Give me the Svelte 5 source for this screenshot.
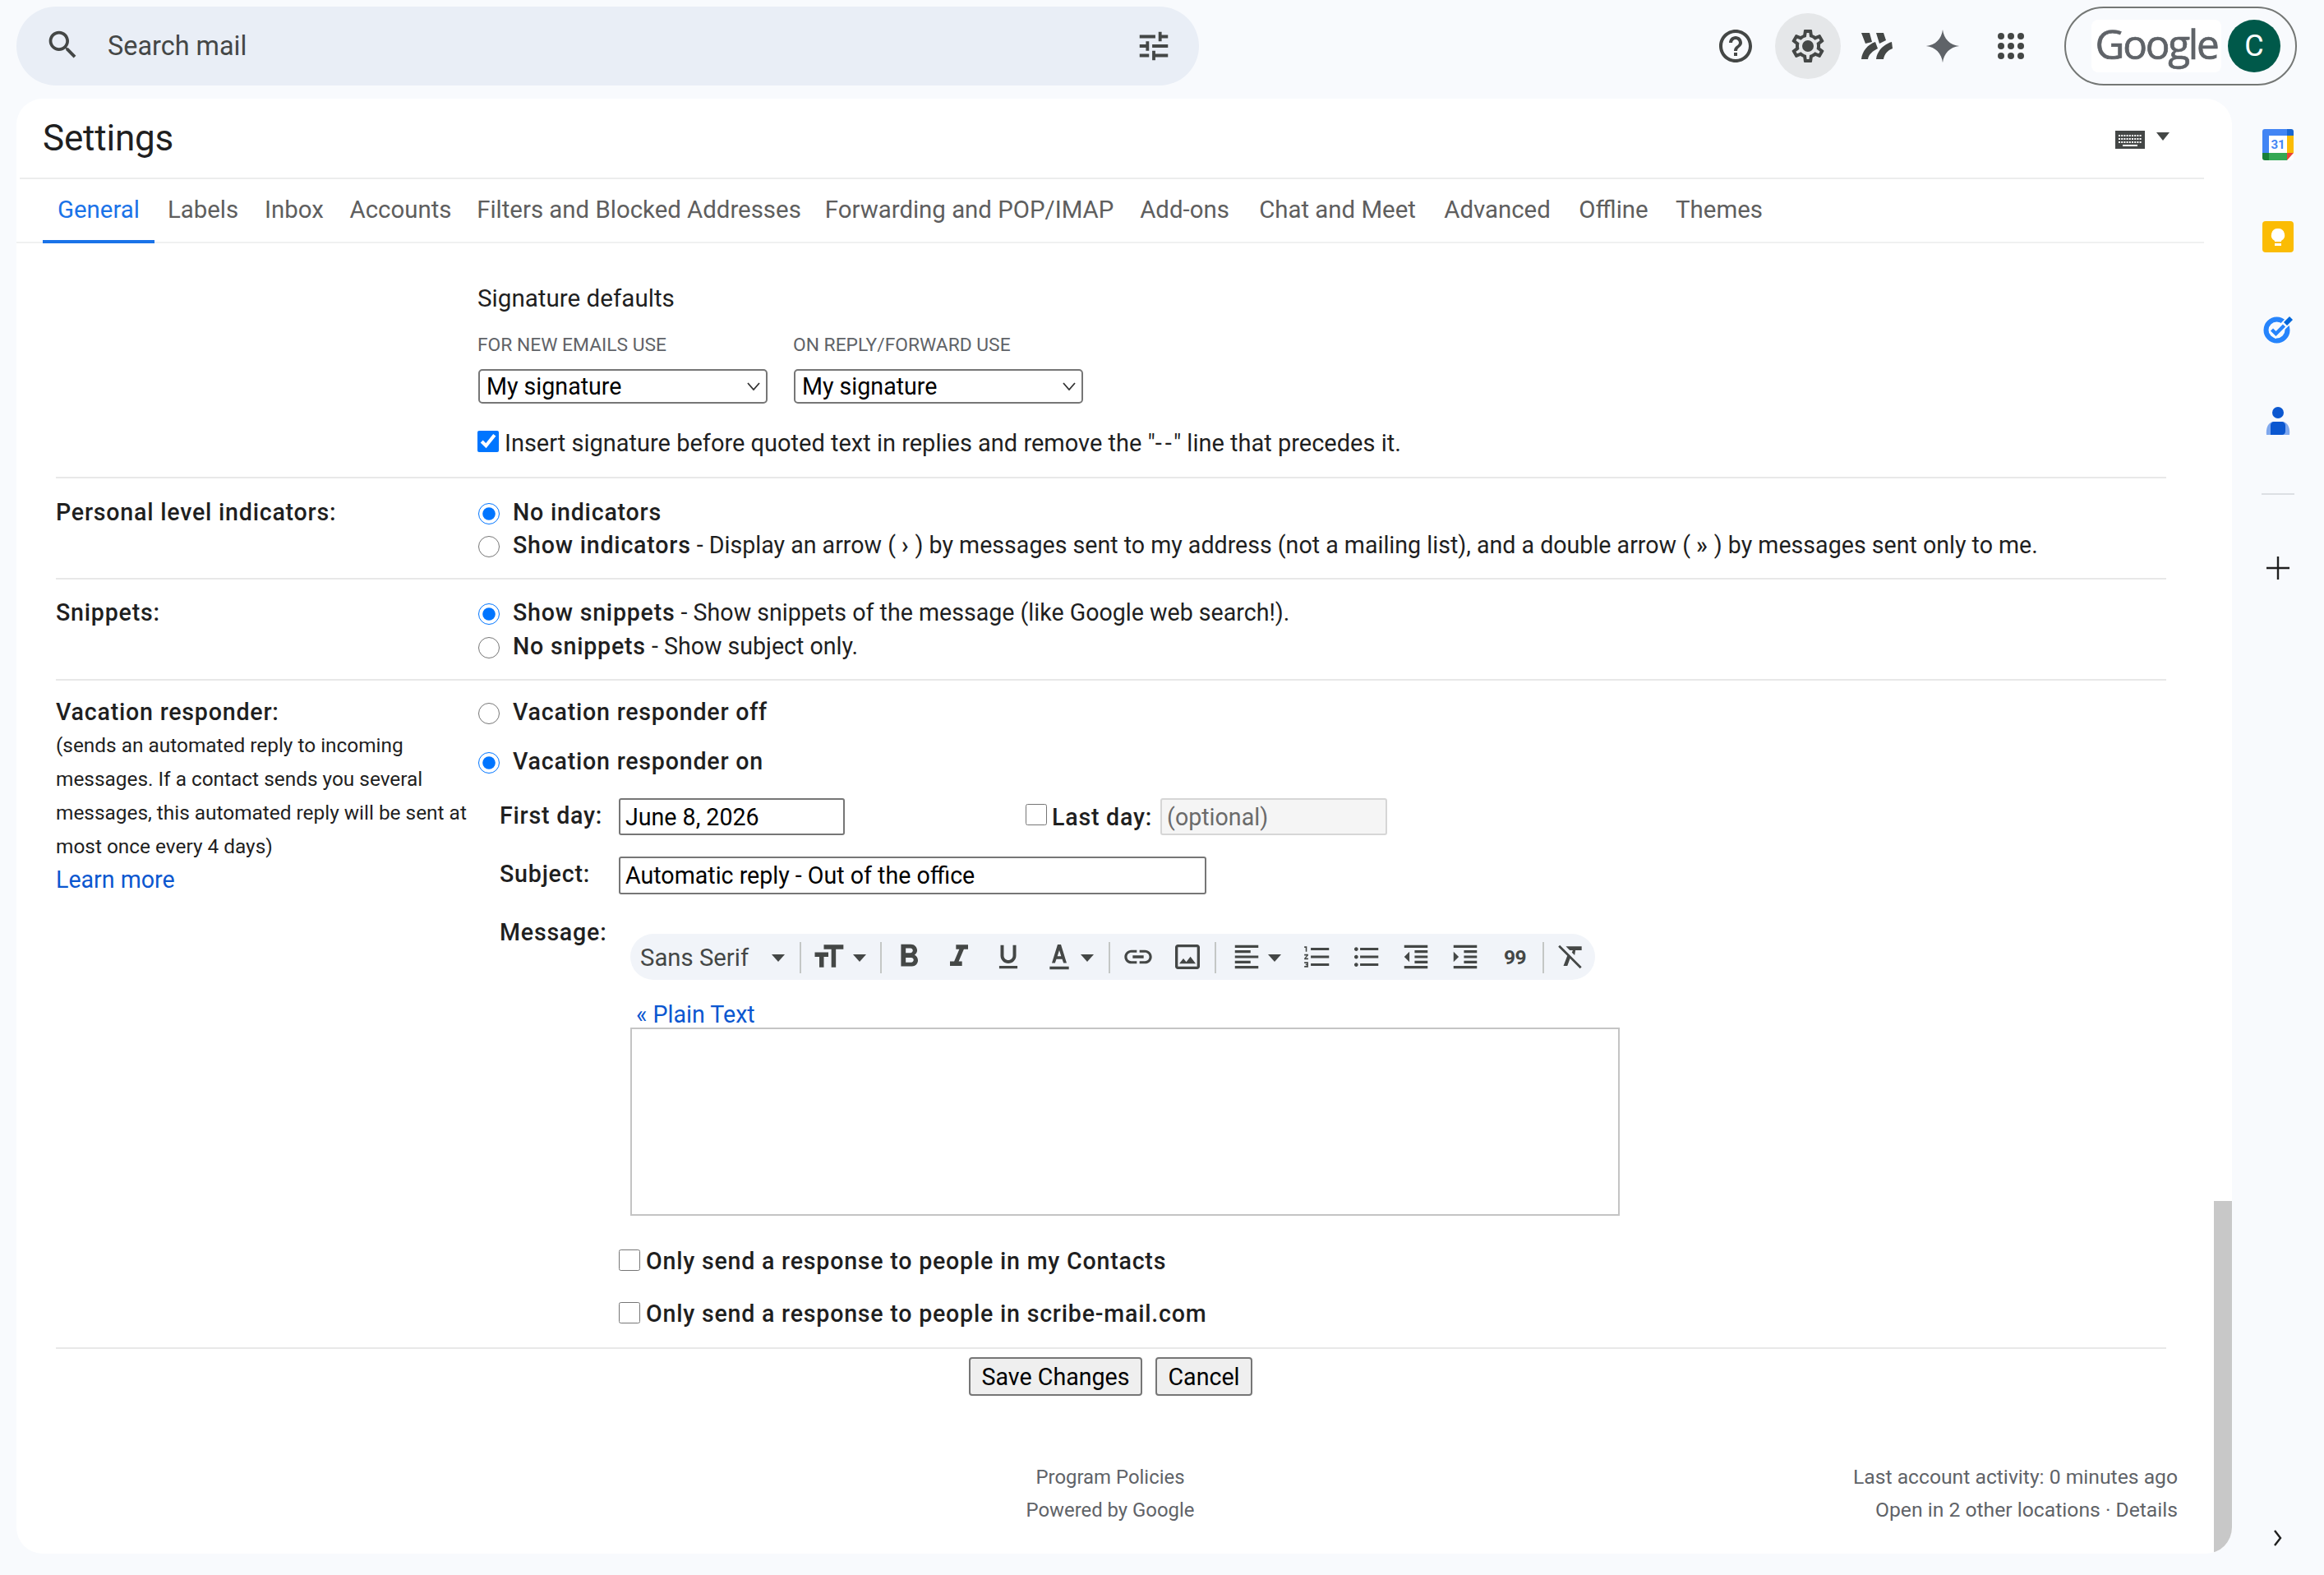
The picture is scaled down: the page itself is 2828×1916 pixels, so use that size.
<script>
  const tabs = [['General',136],['Labels',118],['Inbox',104],['Accounts',155],['Filters and Blocked Addresses',425],['Forwarding and POP/IMAP',379],['Add-ons',145],['Chat and Meet',227],['Advanced',162],['Offline',121],['Themes',136]];
  const P = {
    bold:'M15.6 10.79c.97-.67 1.65-1.77 1.65-2.79 0-2.26-1.75-4-4-4H7v14h7.04c2.09 0 3.71-1.7 3.71-3.79 0-1.52-.86-2.82-2.15-3.42zM10 6.5h3c.83 0 1.5.67 1.5 1.5s-.67 1.5-1.5 1.5h-3v-3zm3.5 9H10v-3h3.5c.83 0 1.5.67 1.5 1.5s-.67 1.5-1.5 1.5z',
    italic:'M10 4v3h2.21l-3.42 8H6v3h8v-3h-2.21l3.42-8H18V4z',
    underline:'M12 17c3.31 0 6-2.69 6-6V3h-2.5v8c0 1.93-1.57 3.5-3.5 3.5S8.5 12.93 8.5 11V3H6v8c0 3.31 2.69 6 6 6zm-7 2v2h14v-2H5z',
    color:'M5 19h14v2.2H5zM6.6 16.5h2.3l1-2.9h4.2l1 2.9h2.3L13.2 3h-2.4zM10.6 11.6L12 7.2l1.4 4.4z',
    link:'M3.9 12c0-1.71 1.39-3.1 3.1-3.1h4V7H7c-2.76 0-5 2.24-5 5s2.24 5 5 5h4v-1.9H7c-1.71 0-3.1-1.39-3.1-3.1zM8 13h8v-2H8v2zm9-6h-4v1.9h4c1.71 0 3.1 1.39 3.1 3.1s-1.39 3.1-3.1 3.1h-4V17h4c2.76 0 5-2.24 5-5s-2.24-5-5-5z',
    image:'M19 5v14H5V5h14m0-2H5c-1.1 0-2 .9-2 2v14c0 1.1.9 2 2 2h14c1.1 0 2-.9 2-2V5c0-1.1-.9-2-2-2zm-4.86 8.86l-3 3.87L9 13.14 6 17h12l-3.86-5.14z',
    align:'M15 15H3v2h12v-2zm0-8H3v2h12V7zM3 13h18v-2H3v2zm0 8h18v-2H3v2zM3 3v2h18V3H3z',
    numbered:'M2 17h2v.5H3v1h1v.5H2v1h3v-4H2v1zm1-9h1V4H2v1h1v3zm-1 3h1.8L2 13.1v.9h3v-1H3.2L5 10.9V10H2v1zm5-6v2h14V5H7zm0 14h14v-2H7v2zm0-6h14v-2H7v2z',
    bullet:'M4 10.5c-.83 0-1.5.67-1.5 1.5s.67 1.5 1.5 1.5 1.5-.67 1.5-1.5-.67-1.5-1.5-1.5zm0-6c-.83 0-1.5.67-1.5 1.5S3.17 7.5 4 7.5 5.5 6.83 5.5 6 4.83 4.5 4 4.5zm0 12c-.83 0-1.5.68-1.5 1.5s.68 1.5 1.5 1.5 1.5-.68 1.5-1.5-.67-1.5-1.5-1.5zM7 19h14v-2H7v2zm0-6h14v-2H7v2zm0-8v2h14V5H7z',
    outdent:'M11 17h10v-2H11v2zm-8-5l4 4V8l-4 4zm0 9h18v-2H3v2zM3 3v2h18V3H3zm8 6h10V7H11v2zm0 4h10v-2H11v2z',
    indent:'M3 21h18v-2H3v2zM3 8v8l4-4-4-4zm8 9h10v-2H11v2zM3 3v2h18V3H3zm8 6h10V7H11v2zm0 4h10v-2H11v2z',
    clear:'M3.27 3L2 4.27l6.97 6.97L6 19h3l2.07-5.66L18.73 21 20 19.73 3.55 3.27 3.27 3zM8 4v.18L10.82 7h2.4l-.72 1.68 2.1 2.1L15.21 7H20V4H8z',
    size:'M9 4v3h5v12h3V7h5V4H9zm-6 8h3v7h3v-7h3V9H3v3z',
    gear:'M19.43 12.98c.04-.32.07-.64.07-.98 0-.34-.03-.66-.07-.98l2.11-1.65c.19-.15.24-.42.12-.64l-2-3.46c-.09-.16-.26-.25-.44-.25-.06 0-.12.01-.17.03l-2.49 1c-.52-.4-1.08-.73-1.69-.98l-.38-2.65C14.46 2.18 14.25 2 14 2h-4c-.25 0-.46.18-.49.42l-.38 2.65c-.61.25-1.17.59-1.69.98l-2.49-1c-.06-.02-.12-.03-.18-.03-.17 0-.34.09-.43.25l-2 3.46c-.13.22-.07.49.12.64l2.11 1.65c-.04.32-.07.65-.07.98 0 .33.03.66.07.98l-2.11 1.65c-.19.15-.24.42-.12.64l2 3.46c.09.16.26.25.44.25.06 0 .12-.01.17-.03l2.49-1c.52.4 1.08.73 1.69.98l.38 2.65c.03.24.24.42.49.42h4c.25 0 .46-.18.49-.42l.38-2.65c.61-.25 1.17-.59 1.69-.98l2.49 1c.06.02.12.03.18.03.17 0 .34-.09.43-.25l2-3.46c.12-.22.07-.49-.12-.64l-2.11-1.65zm-1.98-1.71c.04.31.05.52.05.73 0 .21-.02.43-.05.73l-.14 1.13.89.7 1.08.84-.7 1.21-1.27-.51-1.04-.42-.9.68c-.43.32-.84.56-1.25.73l-1.06.43-.16 1.13-.2 1.35h-1.4l-.19-1.35-.16-1.13-1.06-.43c-.43-.18-.83-.41-1.23-.71l-.91-.7-1.06.43-1.27.51-.7-1.21 1.08-.84.89-.7-.14-1.13c-.03-.31-.05-.54-.05-.74s.02-.43.05-.73l.14-1.13-.89-.7-1.08-.84.7-1.21 1.27.51 1.04.42.9-.68c.43-.32.84-.56 1.25-.73l1.06-.43.16-1.13.2-1.35h1.39l.19 1.35.16 1.13 1.06.43c.43.18.83.41 1.23.71l.91.7 1.06-.43 1.27-.51.7 1.21-1.07.85-.89.7.14 1.13zM12 8.5a3.5 3.5 0 1 0 0 7 3.5 3.5 0 0 0 0-7z',
    help:'M11 18h2v-2h-2v2zm1-16C6.48 2 2 6.48 2 12s4.48 10 10 10 10-4.48 10-10S17.52 2 12 2zm0 18c-4.41 0-8-3.59-8-8s3.59-8 8-8 8 3.59 8 8-3.59 8-8 8zm0-14c-2.21 0-4 1.79-4 4h2c0-1.1.9-2 2-2s2 .9 2 2c0 2-3 1.75-3 5h2c0-2.25 3-2.5 3-5 0-2.21-1.79-4-4-4z',
    search:'M15.5 14h-.79l-.28-.27C15.41 12.59 16 11.11 16 9.5 16 5.91 13.09 3 9.5 3S3 5.91 3 9.5 5.91 16 9.5 16c1.61 0 3.09-.59 4.23-1.57l.27.28v.79l5 4.99L20.49 19l-4.99-5zm-6 0C7.01 14 5 11.99 5 9.5S7.01 5 9.5 5 14 7.01 14 9.5 11.99 14 9.5 14z',
    tune:'M3 17v2h6v-2H3zM3 5v2h10V5H3zm10 16v-2h8v-2h-8v-2h-2v6h2zM7 9v2H3v2h4v2h2V9H7zm14 4v-2H11v2h10zm-6-4h2V7h4V5h-4V3h-2v6z',
    star:'M12 1.5C12.7 7.4 16.6 11.3 22.5 12 16.6 12.7 12.7 16.6 12 22.5 11.3 16.6 7.4 12.7 1.5 12 7.4 11.3 11.3 7.4 12 1.5z',
    chat:'M2 4h5l1.5 5.5-4 1zM11 4h4.5L17 8.5l-4 2zM2 20C2.5 15 6 11 10.5 9.5L12 13.5C9 15 6.5 17 6 20zM11 20C11.5 15 15.5 11 20.5 9.5L21 13.5C18 14.5 16 17 15.5 20z'
  };
  const tb = [
    {k:'size',x:1009,s:44},{k:'bold',x:1107,s:46},{k:'italic',x:1168,s:44},{k:'underline',x:1228,s:38},{k:'color',x:1290,s:40},
    {k:'link',x:1386,s:40},{k:'image',x:1446,s:40},{k:'align',x:1518,s:38},{k:'numbered',x:1604,s:38},{k:'bullet',x:1664,s:38},{k:'outdent',x:1724,s:38},{k:'indent',x:1784,s:38},{k:'clear',x:1913,s:38}
  ];
  const drops = [948,1047,1324,1552];
  const seps = [974,1072,1350,1479,1878];
</script>

<div class="page">
  <header class="topbar">
    <div class="search">
      <svg class="searchic" viewBox="0 0 24 24"><path d={P.search} /></svg>
      <span class="search-text">Search mail</span>
      <svg class="ic44 tune" viewBox="0 0 24 24"><path d={P.tune} /></svg>
    </div>
    <div class="actions">
      <span class="act a1"><svg class="ic48" viewBox="0 0 24 24"><path d={P.help} /></svg></span>
      <span class="act a2 on"><svg class="ic48" viewBox="0 0 24 24"><path d={P.gear} /></svg></span>
      <span class="act a3"><svg class="ic48" viewBox="0 0 24 24"><path d={P.chat} /></svg></span>
      <span class="act a4"><svg class="ic44 grey" viewBox="0 0 24 24"><path d={P.star} /></svg></span>
      <span class="act a5">
        <svg class="ic48" viewBox="0 0 24 24">
          {#each [6,12,18] as y}{#each [6,12,18] as x}<circle cx={x} cy={y} r="2" />{/each}{/each}
        </svg>
      </span>
    </div>
    <div class="account">
      <span class="google">Google</span>
      <span class="avatar">C</span>
    </div>
  </header>

  <div class="main">
    <section class="panel">
      <div class="title-row">
        <h1>Settings</h1>
        <div class="kbd">
          <svg width="36" height="22" viewBox="0 0 36 22"><rect width="36" height="22" fill="#444746"/><path d="M4 6h28M4 10h28M4 14h28" stroke="#fff" stroke-width="2" stroke-dasharray="2 1.2"/><path d="M9 18h18" stroke="#fff" stroke-width="2"/></svg>
          <span class="kbd-arrow"></span>
        </div>
      </div>
      <nav class="tabs">
        {#each tabs as t, i}
          <span class="tab" class:active={i===0} style="width:{t[1]}px">{t[0]}</span>
        {/each}
      </nav>

      <div class="content">
        <div class="sig">
          <div class="sig-title">Signature defaults</div>
          <div class="sig-cols">
            <div class="sig-col">
              <div class="caps">FOR NEW EMAILS USE</div>
              <select class="sel"><option>My signature</option></select>
            </div>
            <div class="sig-col">
              <div class="caps">ON REPLY/FORWARD USE</div>
              <select class="sel"><option>My signature</option></select>
            </div>
          </div>
          <label class="check-row"><input class="cb" type="checkbox" checked /><span>Insert signature before quoted text in replies and remove the "<span class="dash">--</span>" line that precedes it.</span></label>
        </div>

        <div class="row personal">
          <div class="lab"><b>Personal level indicators:</b></div>
          <div class="opts">
            <label class="opt"><input class="rd" type="radio" name="p" checked /><span><b>No indicators</b></span></label>
            <label class="opt"><input class="rd" type="radio" name="p" /><span><b>Show indicators</b> - Display an arrow ( <b>›</b> ) by messages sent to my address (not a mailing list), and a double arrow ( <b>»</b> ) by messages sent only to me.</span></label>
          </div>
        </div>

        <div class="row snippets">
          <div class="lab"><b>Snippets:</b></div>
          <div class="opts">
            <label class="opt"><input class="rd" type="radio" name="s" checked /><span><b>Show snippets</b> - Show snippets of the message (like Google web search!).</span></label>
            <label class="opt o2"><input class="rd" type="radio" name="s" /><span><b>No snippets</b> - Show subject only.</span></label>
          </div>
        </div>

        <div class="row vacation">
          <div class="lab">
            <b>Vacation responder:</b>
            <p class="note">(sends an automated reply to incoming<br />messages. If a contact sends you several<br />messages, this automated reply will be sent at<br />most once every 4 days)</p>
            <span class="link learn">Learn more</span>
          </div>
          <div class="opts">
            <label class="opt"><input class="rd" type="radio" name="v" /><span><b>Vacation responder off</b></span></label>
            <label class="opt o3"><input class="rd" type="radio" name="v" checked /><span><b>Vacation responder on</b></span></label>

            <div class="form">
              <div class="f-row first">
                <b class="f-lab">First day:</b>
                <input class="txt date" value="June 8, 2026" />
                <input class="cb last-cb" type="checkbox" />
                <b class="last-lab">Last day:</b>
                <input class="txt opt-in" placeholder="(optional)" disabled />
              </div>
              <div class="f-row subj">
                <b class="f-lab">Subject:</b>
                <input class="txt subject" value="Automatic reply - Out of the office" />
              </div>
              <div class="f-row msg">
                <b class="f-lab msg-lab">Message:</b>
                <div class="editor">
                  <div class="toolbar">
                    <span class="font-name">Sans Serif</span>
                    {#each drops as x}<span class="drop" style="left:{x-768-8}px"></span>{/each}
                    {#each seps as x}<span class="sep" style="left:{x-768}px"></span>{/each}
                    {#each tb as t}
                      <svg class="tb-ic" style="left:{t.x-768-t.s/2}px;top:{(56-t.s)/2}px;width:{t.s}px;height:{t.s}px" viewBox="0 0 24 24"><path d={P[t.k]} /></svg>
                    {/each}
                    <span class="quote">99</span>
                  </div>
                  <div class="plain link">« Plain Text</div>
                  <div class="box"></div>
                </div>
              </div>
              <label class="only o-a"><input class="cb" type="checkbox" /><b>Only send a response to people in my Contacts</b></label>
              <label class="only o-b"><input class="cb" type="checkbox" /><b>Only send a response to people in scribe-mail.com</b></label>
            </div>
          </div>
        </div>

        <div class="buttons">
          <button class="btn save">Save Changes</button>
          <button class="btn cancel">Cancel</button>
        </div>
      </div>

      <footer class="foot">
        <span></span>
        <div class="foot-c"><div>Program Policies</div><div>Powered by Google</div></div>
        <div class="foot-r"><div>Last account activity: 0 minutes ago</div><div>Open in 2 other locations · Details</div></div>
      </footer>

      <div class="scroll"></div>
    </section>

    <aside class="side">
      <span class="s-item">
        <svg width="38" height="38" viewBox="0 0 38 38">
          <rect x="0" y="0" width="38" height="38" rx="3" fill="#fff"/>
          <path d="M3 0h27v8H8v21H0V3a3 3 0 0 1 3-3z" fill="#4285f4"/>
          <path d="M30 0h5a3 3 0 0 1 3 3v5h-8z" fill="#1967d2"/>
          <path d="M30 8h8v21h-8z" fill="#fbbc04"/>
          <path d="M8 29h22v9H8z" fill="#34a853"/>
          <path d="M0 29h8v9H3a3 3 0 0 1-3-3z" fill="#188038"/>
          <path d="M30 29h8l-8 9z" fill="#ea4335"/>
          <text class="cal" x="19" y="24" text-anchor="middle">31</text>
        </svg>
      </span>
      <span class="s-item">
        <svg width="38" height="38" viewBox="0 0 38 38">
          <rect width="38" height="38" rx="4" fill="#fbbc04"/>
          <path d="M19 9a8 8 0 0 0-4 15v1h8v-1a8 8 0 0 0-4-15z" fill="#fff"/>
          <rect x="15" y="27" width="8" height="3" fill="#fff"/>
        </svg>
      </span>
      <span class="s-item">
        <svg width="38" height="36" viewBox="0 0 38 36">
          <circle cx="17.5" cy="19.5" r="13" fill="none" stroke="#2684fc" stroke-width="6"/>
          <path d="M11 19l5 5L33 7" fill="none" stroke="#f8fafd" stroke-width="9"/>
          <path d="M11.5 19l5 5 10-10" fill="none" stroke="#2684fc" stroke-width="4.4"/>
          <path d="M26 10l7-7 4 4-7 7z" fill="#0066da"/>
        </svg>
      </span>
      <span class="s-item">
        <svg width="30" height="34" viewBox="0 0 30 34">
          <circle cx="15" cy="7" r="7" fill="#0b57d0"/>
          <path d="M1 34c-1-8 2-16 9-16h10c7 0 10 8 9 16z" fill="#7fa8ee"/>
          <path d="M6 34V22c0-2 2-4 4-4h9c3 0 5 2 5 5v7c0 2-2 4-4 4z" fill="#0b57d0"/>
        </svg>
      </span>
      <span class="s-div"></span>
      <span class="s-plus">
        <svg width="30" height="30" viewBox="0 0 30 30"><path d="M13.8 1h2.4v12.8H29v2.4H16.2V29h-2.4V16.2H1v-2.4h12.8z" fill="#1f1f1f"/></svg>
      </span>
      <span class="s-chev">
        <svg width="12" height="20" viewBox="0 0 12 20"><path d="M2 1l7 9-7 9" fill="none" stroke="#1f1f1f" stroke-width="2.4"/></svg>
      </span>
    </aside>
  </div>
</div>

<style>
  :global(body) { margin: 0; background: #f8fafd; }
  .page {
    width: 2828px; height: 1916px; overflow: hidden; background: #f8fafd;
    display: flex; flex-direction: column;
    font-family: Roboto, "Liberation Sans", sans-serif; font-size: 28.6px; color: #1f1f1f;
  }
  b { font-weight: 500; letter-spacing: .78px; }
  .dash { letter-spacing: 4px; margin-right: -2px; }
  .ic44 { width: 44px; height: 44px; fill: #444746; display: block; }
  .ic48 { width: 48px; height: 48px; fill: #444746; display: block; }
  .searchic { width: 45px; height: 45px; fill: #444746; margin-top: -4px; flex: none; }
  .grey { width: 46px; height: 46px; fill: #5f6368; }

  .topbar { height: 120px; display: flex; align-items: flex-start; padding: 8px 33px 0 20px; box-sizing: border-box; }
  .search {
    width: 1439px; height: 96px; border-radius: 48px; background: #e9eef6;
    display: flex; align-items: center; padding-left: 34px; padding-right: 32px; box-sizing: border-box;
  }
  .search-text { margin-left: 32px; font-size: 32.4px; color: #444746; }
  .tune { margin-left: auto; width: 46px; height: 46px; }
  .actions { display: flex; margin-left: auto; height: 96px; align-items: center; }
  .act { width: 80px; height: 80px; border-radius: 50%; display: flex; align-items: center; justify-content: center; }
  .a2 { margin-left: 8px; } .a3 { margin-left: 5px; } .a4 { margin-left: -1px; } .a5 { margin-left: 3px; }
  .on { background: #e5e7e9; }
  .account {
    margin-left: 25px; width: 283px; height: 96px; box-sizing: border-box; border: 2px solid #747775; border-radius: 48px;
    display: flex; align-items: center; padding-left: 31px; gap: 8px;
  }
  .google {
    width: 158px; height: 64px; background: #fff; border-radius: 8px; display: flex; align-items: center; justify-content: center;
    font-family: "Open Sans", sans-serif; font-size: 49.5px; letter-spacing: -2.3px; color: #5f6368; padding-bottom: 6px; box-sizing: border-box;
    -webkit-text-stroke: .7px #5f6368;
  }
  .avatar {
    width: 64px; height: 64px; border-radius: 50%; background: #00594a; color: #fff; font-size: 36px;
    display: flex; align-items: center; justify-content: center;
  }

  .main { flex: 1; display: flex; }
  .panel {
    margin-left: 20px; width: 2696px; height: 1770px; background: #fff; border-radius: 32px; position: relative; overflow: hidden;
  }
  .title-row { height: 98px; margin: 0 34px 0 4px; border-bottom: 2px solid #eceded; box-sizing: border-box; display: flex; align-items: center; padding-left: 28px; }
  h1 { font-size: 44px; font-weight: 400; margin: 0; color: #1f1f1f; letter-spacing: -0.2px; }
  .kbd { margin-left: auto; margin-right: 42px; display: flex; align-items: flex-start; margin-top: 6px; height: 24px; gap: 14px; }
  .kbd-arrow { width: 0; height: 0; border: 8px solid transparent; border-top: 10px solid #444746; border-bottom: 0; margin-top: 2px; }

  .tabs { display: flex; height: 78px; margin-right: 34px; padding-left: 32px; box-shadow: inset 0 -2px 0 #f0f1f1; box-sizing: border-box; }
  .tab { flex: none; text-align: center; line-height: 75px; color: #5e5e5e; font-size: 29.4px; white-space: nowrap; height: 78px; box-sizing: border-box; }
  .active { color: #1a73e8; border-bottom: 4px solid #1a73e8; }

  .content { margin-left: 48px; width: 2568px; line-height: 40px; }
  .sig { padding: 47px 0 21px 513px; border-bottom: 2px solid #e8e8e8; }
  .sig-title { font-size: 29.6px; }
  .sig-cols { display: flex; gap: 32px; margin: 17px 0 0 1px; }
  .sig-col { width: 352px; }
  .caps { font-size: 22.8px; color: #5f6368; margin-left: -1px; }
  .sel {
    display: block; margin-top: 9px; width: 352px; height: 42px; box-sizing: border-box; border: 2px solid #767676; border-radius: 5px;
    font: 28.6px Roboto, sans-serif; color: #000; padding: 0 8px; appearance: none;
    background: #fff url("data:image/svg+xml,%3Csvg xmlns='http://www.w3.org/2000/svg' width='16' height='10'%3E%3Cpath d='M1 1l7 8 7-8' fill='none' stroke='%23333' stroke-width='1.8'/%3E%3C/svg%3E") no-repeat right 7px center;
  }
  .check-row { display: flex; align-items: center; margin-top: 28px; gap: 7px; font-size: 29px; }
  .check-row .cb { margin-top: -4px; }
  .cb { width: 26px; height: 26px; margin: 0; flex: none; }
  .rd { width: 26px; height: 26px; margin: 0; flex: none; }

  .row { display: grid; grid-template-columns: 513px 1fr; border-bottom: 2px solid #e8e8e8; }
  .lab { line-height: 40px; }
  .opt { display: flex; align-items: center; gap: 16px; height: 40px; margin-left: 1px; }
  .opt .rd { margin-top: 3px; }
  .personal { padding: 21px 0 20px; }
  .snippets { padding: 20px 0 20px; }
  .o2 { margin-top: 1px; }
  .vacation { padding: 18px 0 21px; border-bottom: 2px solid #e8e8e8; }
  .o3 { margin-top: 20px; }
  .note { margin: 0; font-size: 24.4px; line-height: 41px; color: #1f1f1f; }
  .learn { font-size: 28.6px; display: block; }
  .link { color: #0b57d0; }

  .form { margin-left: 27px; }
  .f-row { display: flex; align-items: center; }
  .first { margin-top: 25px; height: 45px; }
  .subj { margin-top: 26px; height: 46px; }
  .first .f-lab, .subj .f-lab { margin-top: -4px; }
  .msg { align-items: flex-start; margin-top: 48px; }
  .f-lab { width: 145px; flex: none; }
  .msg-lab { margin-top: -22px; }
  .txt {
    box-sizing: border-box; height: 100%; border: 2px solid #767676; border-radius: 3px; background: #fff; padding: 0 6px;
    font: 28.6px Roboto, sans-serif; color: #000; outline: none; margin: 0;
  }
  .date { width: 275px; }
  .last-cb { margin: -6px 0 0 220px; }
  .last-lab { margin-left: 6px; }
  .opt-in { margin-left: 10px; width: 276px; background: #f5f5f5; border-color: #d6d6d6; }
  .opt-in::placeholder { color: #6b6b6b; }
  .subject { width: 715px; }

  .editor { margin-left: 14px; width: 1204px; position: relative; }
  .toolbar { position: relative; width: 1174px; height: 56px; border-radius: 28px; background: #f1f4f9; }
  .font-name { position: absolute; left: 12px; top: 9px; font-size: 29.3px; color: #444746; }
  .drop { position: absolute; top: 25px; width: 0; height: 0; border: 8px solid transparent; border-top: 9px solid #444746; border-bottom: 0; }
  .sep { position: absolute; top: 10px; width: 2px; height: 38px; background: #c4c7c5; }
  .tb-ic { position: absolute; fill: #444746; }
  .quote { position: absolute; left: 1063px; top: 9px; font-size: 24.5px; font-weight: 700; color: #444746; letter-spacing: -.6px; }
  .plain { margin: 22px 0 0 7px; height: 36px; line-height: 40px; font-size: 28.6px; }
  .box { box-sizing: border-box; height: 229px; border: 2px solid #c4c4c4; }
  .only { display: flex; align-items: center; gap: 7px; height: 40px; margin-left: 145px; }
  .only .cb { margin-top: -3px; }
  .o-a { margin-top: 35px; }
  .o-b { margin-top: 24px; }

  .buttons { display: flex; justify-content: flex-start; gap: 16px; padding: 10px 0 0 1111px; height: 47px; }
  .btn {
    box-sizing: border-box; height: 47px; background: #efefef; border: 2px solid #767676; border-radius: 4px; color: #000;
    font: 28.6px Roboto, sans-serif; padding: 0; margin: 0;
  }
  .save { width: 211px; } .cancel { width: 118px; }

  .foot { display: grid; grid-template-columns: 1fr auto 1fr; margin: 79px 66px 0 32px; font-size: 24.7px; line-height: 40px; color: #5f6368; }
  .foot-c { text-align: center; font-size: 23.9px; }
  .foot-r { text-align: right; }

  .scroll { position: absolute; right: 0; bottom: 0; width: 22px; height: 429px; background: #c8c8c8; }

  .side { width: 112px; display: flex; flex-direction: column; align-items: center; }
  .s-item { height: 112px; display: flex; align-items: center; justify-content: center; flex: none; }
  .cal { font: 700 15px Roboto, sans-serif; fill: #4285f4; }
  .s-div { width: 40px; height: 2px; background: #dcdfe3; margin-top: 32px; flex: none; }
  .s-plus { margin-top: 74px; height: 30px; flex: none; }
  .s-chev { margin-top: auto; margin-bottom: 42px; height: 20px; }
</style>
